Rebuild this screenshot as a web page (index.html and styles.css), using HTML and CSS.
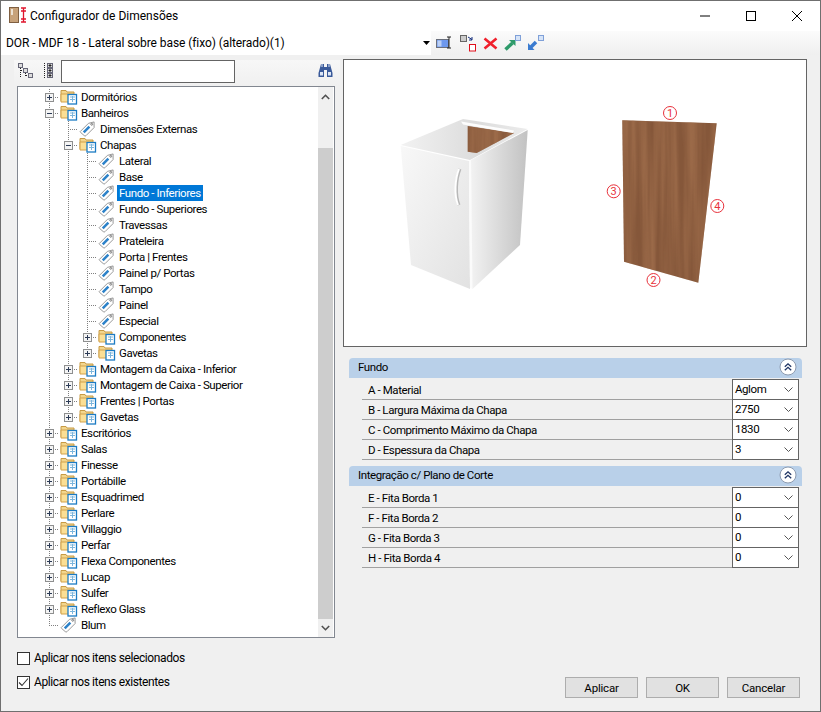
FILE: index.html
```html
<!DOCTYPE html>
<html lang="pt">
<head>
<meta charset="utf-8">
<title>Configurador de Dimensões</title>
<link rel="stylesheet" href="styles.css">
</head>
<body>
<svg class="defs" width="0" height="0" aria-hidden="true">
  <defs>
    <symbol id="plus" viewBox="0 0 9 9"><rect x=".5" y=".5" width="8" height="8" fill="#f4f4f4" stroke="#8e8f8f"/><path d="M2 4.500h5M4.500 2v5" stroke="#2b3a55"/></symbol>
    <symbol id="minus" viewBox="0 0 9 9"><rect x=".5" y=".5" width="8" height="8" fill="#f4f4f4" stroke="#8e8f8f"/><path d="M2 4.500h5" stroke="#2b3a55"/></symbol>
    <symbol id="folder" viewBox="0 0 18 16">
      <path d="M1.500 1.500h5l1 1.500h7v9h-13z" fill="#f3d68d" stroke="#c79a45"/>
      <path d="M1.500 5h13v8h-13z" fill="#fbdf95" stroke="#d2a24c"/>
      <rect x="8.500" y="5.500" width="8.500" height="9.500" fill="#fff" stroke="#1c7cc4" stroke-width="1.300"/>
      <path d="M10.500 8h5M10.500 10.500h5M13 7v6" stroke="#7db6dc"/>
    </symbol>
    <symbol id="tag" viewBox="0 0 17 17">
      <path d="M1 11 9.500 2.500 15.500 1v6l-8.500 8.500q-1 1-2 0l-4-3.500q-1-.5 0-1z" fill="#fff" stroke="#929292"/>
      <path d="M4.500 12 10.500 6" stroke="#2c82c9" stroke-width="2.700"/>
      <circle cx="13" cy="3.500" r="1" fill="#fff" stroke="#777"/>
    </symbol>
    <symbol id="chev" viewBox="0 0 9 5"><path d="M.5.500l4 4 4-4" fill="none" stroke="#555"/></symbol>
    <symbol id="collapse" viewBox="0 0 18 18">
      <circle cx="9" cy="9" r="8" fill="#fff" stroke="#8d9bb0"/>
      <path d="M5.800 8.800 9 5.800l3.200 3M5.800 12.300 9 9.300l3.200 3" fill="none" stroke="#1f3464" stroke-width="1.300"/>
    </symbol>
  </defs>
</svg>

<div class="window">
  <header class="titlebar">
    <svg class="app-icon" width="20" height="18" viewBox="0 0 20 18"><rect x=".5" y=".5" width="9" height="15" fill="#c7a27a" stroke="#7f5f41"/><rect x="2" y="2" width="2" height="6" fill="#ece2d4"/><path d="M12 1h5M14.500 1v14M12 15h5M12 4h5M12 12h5" stroke="#e0142c" stroke-width="1.300"/></svg>
    <span class="title">Configurador de Dimensões</span>
    <div class="winctl">
      <svg width="12" height="12" viewBox="0 0 12 12"><path d="M1 6h10" stroke="#000"/></svg>
      <svg width="12" height="12" viewBox="0 0 12 12"><rect x="1.500" y="1.500" width="9" height="9" fill="none" stroke="#000"/></svg>
      <svg width="12" height="12" viewBox="0 0 12 12"><path d="M1 1l10 10M11 1 1 11" stroke="#000"/></svg>
    </div>
  </header>

  <div class="toolbar">
    <div class="selector">
      <span>DOR - MDF 18 - Lateral sobre base (fixo) (alterado)(1)</span>
      <svg width="7" height="4" viewBox="0 0 7 4"><path d="M0 0h7L3.500 4z" fill="#000"/></svg>
    </div>
    <div class="tools">
      <svg class="t1" width="16" height="14" viewBox="0 0 16 14"><rect x=".5" y="3.500" width="12" height="8" fill="#6d98ee" stroke="#6a6f7c"/><rect x="1.500" y="4.500" width="4" height="6" fill="#bcd0f5"/><path d="M11 1h4M13 1v11M11 12h4" stroke="#222"/></svg>
      <svg class="t2" width="17" height="17" viewBox="0 0 17 17"><rect x=".5" y=".5" width="6" height="6" fill="#ccc" stroke="#666"/><path d="M8 2l4 2.500M12 2v3H9" fill="none" stroke="#102a7a"/><rect x="9.500" y="9.500" width="6" height="6.500" fill="#fff" stroke="#e0101c"/></svg>
      <svg class="t3" width="15" height="13" viewBox="0 0 15 13"><path d="M1.500 1.500 13.500 11.500M13.500 1.500 1.500 11.500" stroke="#f0202c" stroke-width="2.600"/></svg>
      <svg class="t4" width="17" height="16" viewBox="0 0 17 16"><path d="M1.500 14.500 8.500 8" stroke="#2d9a6a" stroke-width="3.500"/><path d="M5 5h6.500v6z" fill="#2d9a6a"/><rect x="11.500" y=".5" width="5" height="5" fill="#d6e4f8" stroke="#7fa0d8"/></svg>
      <svg class="t5" width="17" height="16" viewBox="0 0 17 16"><path d="M9 7 3 13" stroke="#3a7bd0" stroke-width="3.500"/><path d="M1 8v7h6.500z" fill="#3a7bd0"/><rect x="11.500" y=".5" width="5" height="5" fill="#d6e4f8" stroke="#7fa0d8"/></svg>
    </div>
  </div>

  <main class="content">
    <section class="left">
      <div class="treebar">
        <svg class="tb-a" width="15" height="15" viewBox="0 0 15 15"><rect x=".5" y=".5" width="4" height="4" fill="#ddd" stroke="#667"/><rect x="5.500" y="5.500" width="4" height="4" fill="#ddd" stroke="#667"/><rect x="10.500" y="10.500" width="4" height="4" fill="#ddd" stroke="#667"/><path d="M2.500 5v9M3 7.500h2M7.500 10v3M8 12.500h2" stroke="#222" stroke-dasharray="1 1"/></svg>
        <svg class="tb-b" width="11" height="15" viewBox="0 0 11 15"><path d="M1.500 0v15" stroke="#222" stroke-dasharray="1 1"/><rect x="4.500" y=".5" width="5" height="4" fill="#ddd" stroke="#667"/><rect x="4.500" y="5.500" width="5" height="4" fill="#ddd" stroke="#667"/><rect x="4.500" y="10.500" width="5" height="4" fill="#ddd" stroke="#667"/><path d="M5.500 2.500h3M7 1v3M5.500 7.500h3M7 6v3M5.500 12.500h3M7 11v3" stroke="#222"/></svg>
        <input class="search" type="text" aria-label="Pesquisar">
        <svg class="binoc" width="15" height="15" viewBox="0 0 15 15"><path d="M3 1h3v3h3V1h3l2.500 9v4H9V7H6v7H.5v-4z" fill="#3a5a9a"/><rect x="2" y="9" width="3" height="3.500" fill="#dce6f6"/><rect x="10" y="9" width="3" height="3.500" fill="#dce6f6"/><path d="M4 1v3M11 1v3" stroke="#dce6f6"/></svg>
      </div>

      <div class="tree">
        <div class="tree-list">
          <div class="row"><i class="g gt"><svg class="exp"><use href="#plus"/></svg></i><svg class="ic"><use href="#folder"/></svg><span class="lb">Dormitórios</span></div>
          <div class="row"><i class="g gt"><svg class="exp"><use href="#minus"/></svg></i><svg class="ic"><use href="#folder"/></svg><span class="lb">Banheiros</span></div>
          <div class="row"><i class="g gv"></i><i class="g gt"></i><svg class="ic"><use href="#tag"/></svg><span class="lb">Dimensões Externas</span></div>
          <div class="row"><i class="g gv"></i><i class="g gt"><svg class="exp"><use href="#minus"/></svg></i><svg class="ic"><use href="#folder"/></svg><span class="lb">Chapas</span></div>
          <div class="row"><i class="g gv"></i><i class="g gv"></i><i class="g gt"></i><svg class="ic"><use href="#tag"/></svg><span class="lb">Lateral</span></div>
          <div class="row"><i class="g gv"></i><i class="g gv"></i><i class="g gt"></i><svg class="ic"><use href="#tag"/></svg><span class="lb">Base</span></div>
          <div class="row"><i class="g gv"></i><i class="g gv"></i><i class="g gt"></i><svg class="ic"><use href="#tag"/></svg><span class="lb sel">Fundo - Inferiores</span></div>
          <div class="row"><i class="g gv"></i><i class="g gv"></i><i class="g gt"></i><svg class="ic"><use href="#tag"/></svg><span class="lb">Fundo - Superiores</span></div>
          <div class="row"><i class="g gv"></i><i class="g gv"></i><i class="g gt"></i><svg class="ic"><use href="#tag"/></svg><span class="lb">Travessas</span></div>
          <div class="row"><i class="g gv"></i><i class="g gv"></i><i class="g gt"></i><svg class="ic"><use href="#tag"/></svg><span class="lb">Prateleira</span></div>
          <div class="row"><i class="g gv"></i><i class="g gv"></i><i class="g gt"></i><svg class="ic"><use href="#tag"/></svg><span class="lb">Porta | Frentes</span></div>
          <div class="row"><i class="g gv"></i><i class="g gv"></i><i class="g gt"></i><svg class="ic"><use href="#tag"/></svg><span class="lb">Painel p/ Portas</span></div>
          <div class="row"><i class="g gv"></i><i class="g gv"></i><i class="g gt"></i><svg class="ic"><use href="#tag"/></svg><span class="lb">Tampo</span></div>
          <div class="row"><i class="g gv"></i><i class="g gv"></i><i class="g gt"></i><svg class="ic"><use href="#tag"/></svg><span class="lb">Painel</span></div>
          <div class="row"><i class="g gv"></i><i class="g gv"></i><i class="g gt"></i><svg class="ic"><use href="#tag"/></svg><span class="lb">Especial</span></div>
          <div class="row"><i class="g gv"></i><i class="g gv"></i><i class="g gt"><svg class="exp"><use href="#plus"/></svg></i><svg class="ic"><use href="#folder"/></svg><span class="lb">Componentes</span></div>
          <div class="row"><i class="g gv"></i><i class="g gv"></i><i class="g gl"><svg class="exp"><use href="#plus"/></svg></i><svg class="ic"><use href="#folder"/></svg><span class="lb">Gavetas</span></div>
          <div class="row"><i class="g gv"></i><i class="g gt"><svg class="exp"><use href="#plus"/></svg></i><svg class="ic"><use href="#folder"/></svg><span class="lb">Montagem da Caixa - Inferior</span></div>
          <div class="row"><i class="g gv"></i><i class="g gt"><svg class="exp"><use href="#plus"/></svg></i><svg class="ic"><use href="#folder"/></svg><span class="lb">Montagem de Caixa - Superior</span></div>
          <div class="row"><i class="g gv"></i><i class="g gt"><svg class="exp"><use href="#plus"/></svg></i><svg class="ic"><use href="#folder"/></svg><span class="lb">Frentes | Portas</span></div>
          <div class="row"><i class="g gv"></i><i class="g gl"><svg class="exp"><use href="#plus"/></svg></i><svg class="ic"><use href="#folder"/></svg><span class="lb">Gavetas</span></div>
          <div class="row"><i class="g gt"><svg class="exp"><use href="#plus"/></svg></i><svg class="ic"><use href="#folder"/></svg><span class="lb">Escritórios</span></div>
          <div class="row"><i class="g gt"><svg class="exp"><use href="#plus"/></svg></i><svg class="ic"><use href="#folder"/></svg><span class="lb">Salas</span></div>
          <div class="row"><i class="g gt"><svg class="exp"><use href="#plus"/></svg></i><svg class="ic"><use href="#folder"/></svg><span class="lb">Finesse</span></div>
          <div class="row"><i class="g gt"><svg class="exp"><use href="#plus"/></svg></i><svg class="ic"><use href="#folder"/></svg><span class="lb">Portábille</span></div>
          <div class="row"><i class="g gt"><svg class="exp"><use href="#plus"/></svg></i><svg class="ic"><use href="#folder"/></svg><span class="lb">Esquadrimed</span></div>
          <div class="row"><i class="g gt"><svg class="exp"><use href="#plus"/></svg></i><svg class="ic"><use href="#folder"/></svg><span class="lb">Perlare</span></div>
          <div class="row"><i class="g gt"><svg class="exp"><use href="#plus"/></svg></i><svg class="ic"><use href="#folder"/></svg><span class="lb">Villaggio</span></div>
          <div class="row"><i class="g gt"><svg class="exp"><use href="#plus"/></svg></i><svg class="ic"><use href="#folder"/></svg><span class="lb">Perfar</span></div>
          <div class="row"><i class="g gt"><svg class="exp"><use href="#plus"/></svg></i><svg class="ic"><use href="#folder"/></svg><span class="lb">Flexa Componentes</span></div>
          <div class="row"><i class="g gt"><svg class="exp"><use href="#plus"/></svg></i><svg class="ic"><use href="#folder"/></svg><span class="lb">Lucap</span></div>
          <div class="row"><i class="g gt"><svg class="exp"><use href="#plus"/></svg></i><svg class="ic"><use href="#folder"/></svg><span class="lb">Sulfer</span></div>
          <div class="row"><i class="g gt"><svg class="exp"><use href="#plus"/></svg></i><svg class="ic"><use href="#folder"/></svg><span class="lb">Reflexo Glass</span></div>
          <div class="row"><i class="g gl"></i><svg class="ic"><use href="#tag"/></svg><span class="lb">Blum</span></div>
        </div>
        <div class="scrollbar">
          <svg class="arrow" width="9" height="6" viewBox="0 0 9 6"><path d="M.8 5 4.500 1.300 8.200 5" fill="none" stroke="#505050" stroke-width="1.600"/></svg>
          <div class="track"><div class="thumb"></div></div>
          <svg class="arrow" width="9" height="6" viewBox="0 0 9 6"><path d="M.8 1 4.500 4.700 8.200 1" fill="none" stroke="#505050" stroke-width="1.600"/></svg>
        </div>
      </div>

      <label class="check first"><span class="box"></span>Aplicar nos itens selecionados</label>
      <label class="check"><span class="box"><svg width="11" height="11" viewBox="0 0 11 11"><path d="M1 5.500 4 8.500 10 1.500" fill="none" stroke="#333" stroke-width="1.100"/></svg></span>Aplicar nos itens existentes</label>
    </section>

    <section class="right">
      <div class="preview">
        <svg width="462" height="286" viewBox="344 60 462 286">
          <defs>
            <filter id="wood" x="0" y="0" width="100%" height="100%" color-interpolation-filters="sRGB">
              <feTurbulence type="fractalNoise" baseFrequency="0.14 0.005" numOctaves="3" seed="7"/>
              <feColorMatrix values="0 0 0 0 .66  0 0 0 0 .46  0 0 0 0 .32  1.200 0 0 0 -.3"/>
              <feComposite in2="SourceGraphic" operator="in" result="grain"/>
              <feMerge><feMergeNode in="SourceGraphic"/><feMergeNode in="grain"/></feMerge>
            </filter>
            <linearGradient id="side" x1="0" y1="0" x2="1" y2="0"><stop offset="0" stop-color="#f2f2f2"/><stop offset="1" stop-color="#c2c2c2"/></linearGradient>
            <linearGradient id="front" x1="0" y1="0" x2="1" y2="1"><stop offset="0" stop-color="#f8f8f8"/><stop offset="1" stop-color="#e2e2e2"/></linearGradient>
            <linearGradient id="topf" x1="0" y1="0" x2="1" y2="0"><stop offset="0" stop-color="#f2f2f2"/><stop offset=".6" stop-color="#dcdcdc"/><stop offset="1" stop-color="#ececec"/></linearGradient>
          </defs>
          <polygon points="400.700,145 463,119 527.700,129 470,160" fill="url(#topf)"/>
          <polygon points="467.700,126 514,133 476.700,153 467.700,151.700" fill="#85573a" filter="url(#wood)"/>
          <polygon points="461,121.500 514,130.500 513,133 463,124.500" fill="#fdfdfd"/>
          <polygon points="400.700,146 469,161 470,289 411,265" fill="url(#front)"/>
          <polygon points="469,161 471,160 473,289 470,288" fill="#fbfbfb"/>
          <polygon points="471,160 527.700,130 520,245 472.500,289" fill="url(#side)"/>
          <path d="M460 169c-4 10-5 26-1 36" fill="none" stroke="#b8b8b8" stroke-width="3"/>
          <path d="M459 169c-4 10-5 26-1 36" fill="none" stroke="#fff" stroke-width="2"/>
          <polygon points="622.300,120.300 716.700,123.300 698.300,282.700 624,261.700" fill="#85573a" filter="url(#wood)"/>
          <g class="mark">
            <circle cx="670" cy="113" r="6.500"/><text x="670" y="117">1</text>
            <circle cx="653.500" cy="280" r="6.500"/><text x="653.500" y="284">2</text>
            <circle cx="613.700" cy="191.300" r="6.500"/><text x="613.700" y="195.300">3</text>
            <circle cx="717.300" cy="206" r="6.500"/><text x="717.300" y="210">4</text>
          </g>
        </svg>
      </div>

      <div class="group">
        <div class="ghead"><span>Fundo</span><svg width="18" height="18"><use href="#collapse"/></svg></div>
        <div class="prow"><span class="pl">A - Material</span><div class="combo"><span>Aglom</span><svg width="9" height="5"><use href="#chev"/></svg></div></div>
        <div class="prow"><span class="pl">B - Largura Máxima da Chapa</span><div class="combo"><span>2750</span><svg width="9" height="5"><use href="#chev"/></svg></div></div>
        <div class="prow"><span class="pl">C - Comprimento Máximo da Chapa</span><div class="combo"><span>1830</span><svg width="9" height="5"><use href="#chev"/></svg></div></div>
        <div class="prow"><span class="pl">D - Espessura da Chapa</span><div class="combo"><span>3</span><svg width="9" height="5"><use href="#chev"/></svg></div></div>
      </div>
      <div class="group">
        <div class="ghead"><span>Integração c/ Plano de Corte</span><svg width="18" height="18"><use href="#collapse"/></svg></div>
        <div class="prow"><span class="pl">E - Fita Borda 1</span><div class="combo"><span>0</span><svg width="9" height="5"><use href="#chev"/></svg></div></div>
        <div class="prow"><span class="pl">F - Fita Borda 2</span><div class="combo"><span>0</span><svg width="9" height="5"><use href="#chev"/></svg></div></div>
        <div class="prow"><span class="pl">G - Fita Borda 3</span><div class="combo"><span>0</span><svg width="9" height="5"><use href="#chev"/></svg></div></div>
        <div class="prow"><span class="pl">H - Fita Borda 4</span><div class="combo"><span>0</span><svg width="9" height="5"><use href="#chev"/></svg></div></div>
      </div>

      <div class="buttons">
        <button type="button">Aplicar</button>
        <button type="button">OK</button>
        <button type="button">Cancelar</button>
      </div>
    </section>
  </main>
</div>
</body>
</html>
```
FILE: styles.css
```css
* { box-sizing: border-box; }
html, body { margin: 0; padding: 0; }
body {
  width: 821px;
  height: 712px;
  overflow: hidden;
  font-family: Roboto, "Liberation Sans", sans-serif;
  font-size: 11.5px;
  letter-spacing: -.42px;
  color: #000;
  background: #f0f0f0;
}
.defs { display: block; height: 0; }
.window {
  width: 821px;
  height: 712px;
  border: 1px solid #6f6f6f;
  display: flex;
  flex-direction: column;
  background: #f0f0f0;
}
.titlebar {
  height: 30px;
  background: #fff;
  display: flex;
  align-items: center;
  padding-left: 8px;
  flex: none;
}
.app-icon { flex: none; }
.title { margin-left: 1px; font-size: 12px; letter-spacing: 0; }
.winctl {
  margin-left: auto;
  display: flex;
  gap: 34px;
  padding-right: 17px;
}
.toolbar {
  height: 24px;
  flex: none;
  display: flex;
  align-items: center;
  background: linear-gradient(#fbfbfb, #efefef);
}
.selector {
  width: 430px;
  height: 24px;
  background: #fff;
  display: flex;
  align-items: center;
  justify-content: space-between;
  padding: 0 1px 0 5px;
  font-size: 12px;
  letter-spacing: -.08px;
}
.tools {
  display: flex;
  align-items: center;
  padding-left: 5px;
}
.t2 { margin-left: 8px; }
.t3 { margin-left: 6px; }
.t4 { margin-left: 6px; }
.t5 { margin-left: 6px; }
.content {
  flex: 1;
  display: flex;
  min-height: 0;
}
.left {
  width: 342px;
  flex: none;
  display: flex;
  flex-direction: column;
  padding-left: 16px;
}
.treebar {
  height: 26px;
  margin: 5px 4px 0 -3px;
  padding: 0 0 0 3px;
  display: flex;
  align-items: flex-start;
  background: linear-gradient(#f7f7f7, #f0f0f0);
  width: 326px;
  flex: none;
}
.tb-a { margin: 3px 0 0 1px; flex: none; }
.tb-b { margin: 3px 0 0 10px; flex: none; }
.search {
  width: 174px;
  height: 23px;
  margin-left: 7px;
  border: 1px solid #646464;
  background: #fff;
  padding: 0;
  flex: none;
}
.binoc { margin: 3px 0 0 83px; flex: none; }
.tree {
  width: 318px;
  height: 552px;
  border: 1px solid #828790;
  background: #fff;
  display: flex;
  flex: none;
}
.tree-list {
  flex: 1;
  padding: 2px 0 0 22px;
}
.row {
  height: 16px;
  display: flex;
  line-height: 16px;
  white-space: nowrap;
}
.g {
  width: 19px;
  height: 16px;
  flex: none;
  display: flex;
  justify-content: center;
  background-repeat: no-repeat;
}
.gv {
  background-image: repeating-linear-gradient(#808080 0 1px, transparent 1px 2px);
  background-size: 1px 16px;
  background-position: 9px 0;
}
.gt {
  background-image:
    repeating-linear-gradient(#808080 0 1px, transparent 1px 2px),
    repeating-linear-gradient(90deg, #808080 0 1px, transparent 1px 2px);
  background-size: 1px 16px, 10px 1px;
  background-position: 9px 0, 9px 8px;
}
.gl {
  background-image:
    repeating-linear-gradient(#808080 0 1px, transparent 1px 2px),
    repeating-linear-gradient(90deg, #808080 0 1px, transparent 1px 2px);
  background-size: 1px 9px, 10px 1px;
  background-position: 9px 0, 9px 8px;
}
.exp {
  width: 9px;
  height: 9px;
  margin-top: 4px;
  margin-right: 1px;
}
.ic {
  width: 19px;
  height: 16px;
  flex: none;
}
.lb {
  margin-left: 1px;
  padding: 0 2px;
  height: 16px;
}
.sel {
  background: #0078d7;
  color: #fff;
}
.scrollbar {
  width: 15px;
  margin: 0 1px 0 0;
  padding-top: 1px;
  background: #f0f0f0;
  display: flex;
  flex-direction: column;
  align-items: center;
  flex: none;
}
.arrow { flex: none; margin: 6px 0; }
.track {
  flex: 1;
  width: 100%;
  padding-top: 42px;
}
.thumb {
  height: 100%;
  background: #cdcdcd;
}
.check {
  display: flex;
  align-items: center;
  height: 14px;
  margin-top: 10px;
  gap: 4px;
  font-size: 12px;
  letter-spacing: -.4px;
}
.check.first { margin-top: 13px; }
.box {
  width: 13px;
  height: 13px;
  border: 1px solid #333;
  background: #fff;
  display: flex;
  align-items: center;
  justify-content: center;
  flex: none;
}
.right {
  flex: 1;
  display: flex;
  flex-direction: column;
  min-width: 0;
}
.preview {
  width: 464px;
  height: 288px;
  margin-top: 4px;
  border: 1px solid #646464;
  background: #fff;
  flex: none;
}
.preview svg { display: block; }
.mark circle { fill: #fff; stroke: #e8323c; }
.mark text {
  fill: #e8323c;
  font-size: 11px;
  letter-spacing: 0;
  text-anchor: middle;
}
.group {
  width: 453px;
  margin-left: 6px;
  flex: none;
}
.preview + .group { margin-top: 11px; }
.group + .group { margin-top: 6px; }
.ghead {
  height: 20px;
  background: #b9d0e9;
  border-radius: 4px 4px 0 0;
  display: flex;
  align-items: center;
  justify-content: space-between;
  padding: 0 5px 2px 9px;
  margin-bottom: 2px;
}
.ghead svg { flex: none; }
.prow {
  height: 20px;
  margin: 0 3px 0 13px;
  border-bottom: 1px solid #a0a0a0;
  display: flex;
  align-items: center;
}
.pl { flex: 1; padding-left: 6px; }
.combo {
  width: 67px;
  height: 21px;
  border: 1px solid #646464;
  background: #fff;
  display: flex;
  align-items: center;
  justify-content: space-between;
  padding: 0 5px 2px 2px;
  margin: -1px 0 0;
  align-self: flex-start;
}
.combo svg { margin-top: 2px; }
.buttons {
  margin-top: auto;
  margin-bottom: 13px;
  margin-left: 222px;
  display: flex;
  gap: 8px;
}
button {
  width: 73px;
  height: 21px;
  border: 1px solid #adadad;
  background: #e1e1e1;
  font: inherit;
  letter-spacing: -.2px;
  color: #000;
  padding: 0;
}
```
